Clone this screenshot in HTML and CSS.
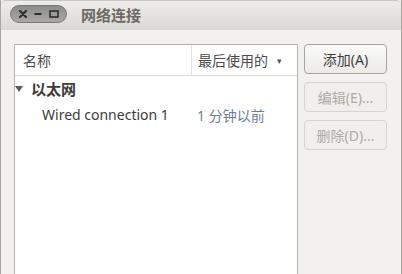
FILE: index.html
```html
<!DOCTYPE html>
<html lang="zh-CN">

<head>
  <meta charset="UTF-8">
  <title>网络连接</title>
  <link rel="stylesheet" href="styles.css">
</head>

<body>
  <div class="window">
    <div class="titlebar">
      <div class="controls">
        <svg class="ctl" width="12" height="12" viewBox="0 0 12 12">
          <path d="M3 3 L9 9 M9 3 L3 9" stroke="#2e2e2e" stroke-width="2.2" stroke-linecap="round" />
        </svg>
        <svg class="ctl" width="12" height="12" viewBox="0 0 12 12">
          <path d="M2.5 6 H9.5" stroke="#2e2e2e" stroke-width="2" />
        </svg>
        <svg class="ctl" width="12" height="12" viewBox="0 0 12 12">
          <rect x="2" y="3" width="8" height="6" fill="none" stroke="#2e2e2e" stroke-width="1.6" />
        </svg>
      </div>
      <div class="title">网络连接</div>
    </div>

    <div class="content">
      <div class="tree">
        <div class="header">
          <div class="col-name">名称</div>
          <div class="col-used">最后使用的 <span class="sort">▾</span></div>
        </div>
        <div class="group">
          <span class="expander"></span>
          <span>以太网</span>
        </div>
        <div class="row">
          <div class="row-name">Wired connection 1</div>
          <div class="row-used">1 分钟以前</div>
        </div>
      </div>

      <div class="buttons">
        <button class="btn">添加(A)</button>
        <button class="btn" disabled>编辑(E)...</button>
        <button class="btn" disabled>删除(D)...</button>
      </div>
    </div>
  </div>
</body>

</html>
```

FILE: styles.css
```css
* {
  box-sizing: border-box;
  margin: 0;
  padding: 0;
}

body {
  width: 402px;
  height: 274px;
  overflow: hidden;
  font-family: "Noto Sans", "Noto Sans CJK SC", sans-serif;
  font-size: 14px;
  color: #3c3c3c;
}

.window {
  width: 402px;
  height: 274px;
  background: #f2f1f0;
  border-left: 1px solid #aaa79f;
  border-right: 1px solid #aaa79f;
  display: flex;
  flex-direction: column;
}

.titlebar {
  height: 30px;
  flex-shrink: 0;
  display: flex;
  align-items: center;
  padding-left: 9px;
  padding-bottom: 3px;
  background: linear-gradient(#eeedeb, #d9d8d4);
  border-top: 1px solid #c9c7c2;
  border-top-left-radius: 5px;
  border-top-right-radius: 5px;
}

.controls {
  width: 57px;
  height: 18px;
  border-radius: 9px;
  background: linear-gradient(#8c8c8a, #a9a9a7);
  border: 1px solid #7a7a78;
  display: flex;
  align-items: center;
  justify-content: space-around;
  padding: 0 4px;
}

.ctl {
  display: block;
}

.title {
  margin-left: 14px;
  font-size: 15px;
  font-weight: bold;
  color: #6d6a64;
}

.content {
  flex: 1;
  display: flex;
  padding: 14px 14px 0 13px;
}

.tree {
  width: 284px;
  background: #fff;
  border: 1px solid #b5b2ab;
  border-bottom: none;
}

.header {
  height: 31px;
  display: flex;
  border-bottom: 1px solid #dedcd8;
  color: #4c4c4c;
}

.col-name {
  width: 177px;
  padding-left: 8px;
  display: flex;
  align-items: center;
  border-right: 1px solid #e4e2de;
}

.col-used {
  flex: 1;
  padding-left: 6px;
  display: flex;
  align-items: center;
}

.sort {
  font-size: 9px;
  margin-left: 9px;
  color: #555;
}

.group {
  height: 25px;
  display: flex;
  align-items: center;
  font-weight: bold;
  font-size: 15px;
  color: #3c3c3c;
}

.expander {
  width: 0;
  height: 0;
  margin: 0 8px 0 0;
  border-left: 4px solid transparent;
  border-right: 4px solid transparent;
  border-top: 6px solid #5a5a5a;
}

.row {
  height: 27px;
  display: flex;
  align-items: center;
}

.row-name {
  width: 182px;
  padding-left: 27px;
  color: #3c3c3c;
}

.row-used {
  color: #6e7f95;
}

.buttons {
  display: flex;
  flex-direction: column;
  gap: 8px;
  margin-left: 6px;
}

.btn {
  width: 83px;
  height: 30px;
  font-family: "Noto Sans", "Noto Sans CJK SC", sans-serif;
  font-size: 14px;
  color: #3c3c3c;
  background: linear-gradient(#fafaf9, #ebeae7);
  border: 1px solid #a8a5a0;
  border-radius: 4px;
}

.btn:disabled {
  color: #aeaba6;
  background: #f0efed;
  border-color: #d6d4d0;
}
```
